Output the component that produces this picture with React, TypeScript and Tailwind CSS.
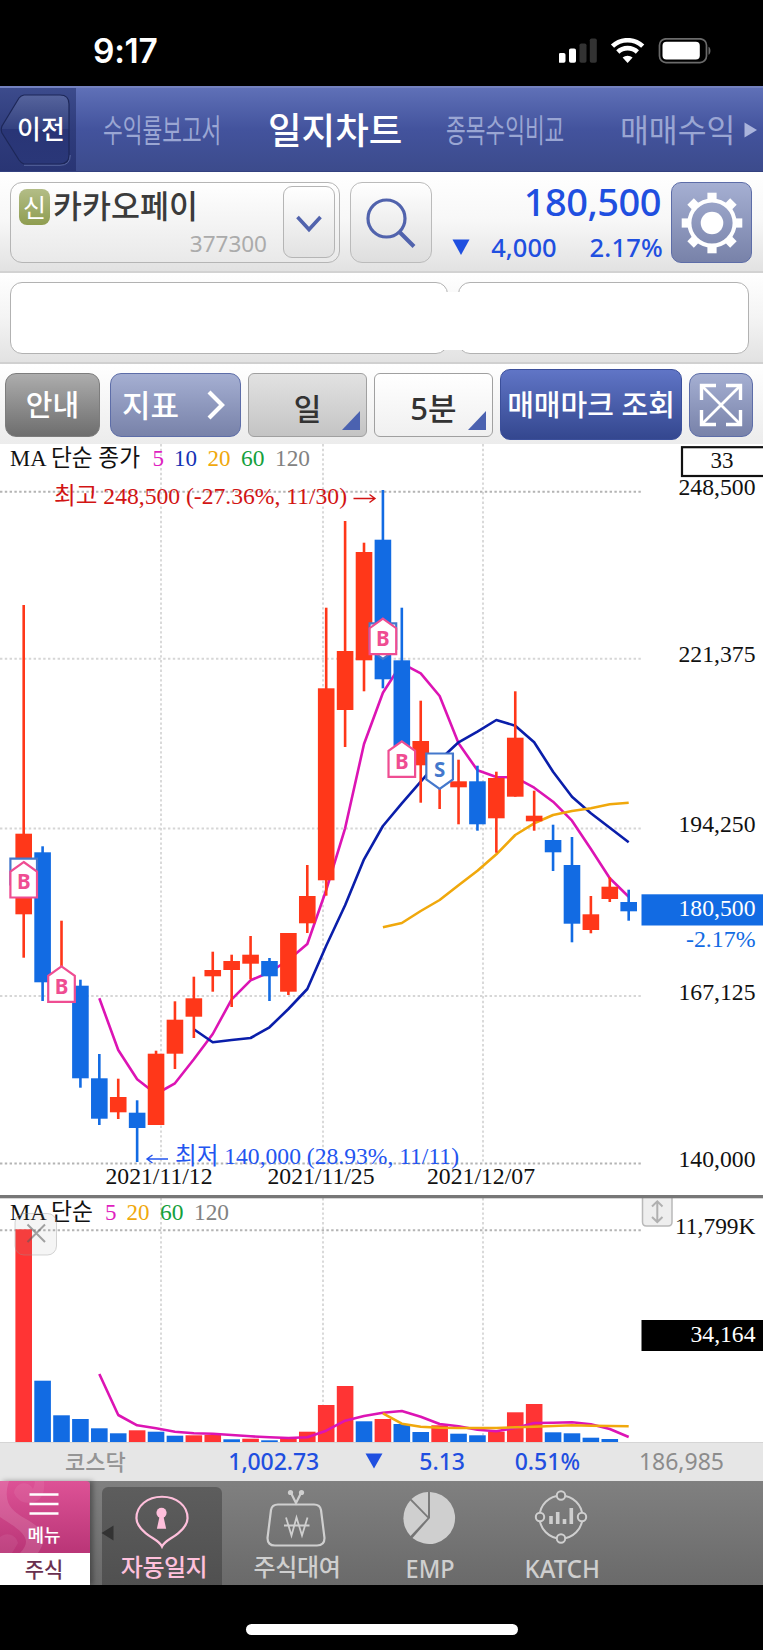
import { ReactNode } from "react";

type Candle = [number, number, number, number, "u" | "d"];

// high, body top, body bottom, low
const candles: Candle[] = [
  [605, 833.7, 914.3, 957.7, "u"],
  [846.3, 852.3, 982.3, 1001, "d"],
  [920.7, 974, 990, 998, "u"],
  [979.7, 985.7, 1078.3, 1087.7, "d"],
  [1054, 1078.3, 1118.7, 1125, "d"],
  [1078.7, 1097, 1112.3, 1119, "u"],
  [1100.3, 1112.7, 1128, 1162, "d"],
  [1050.7, 1053.7, 1125, 1125, "u"],
  [1001.3, 1019.7, 1053.7, 1069, "u"],
  [976.7, 998.3, 1016.7, 1038, "u"],
  [951.7, 970, 976.3, 991.7, "u"],
  [954.7, 961, 970, 1007, "u"],
  [936, 954.7, 963.7, 979.3, "u"],
  [958, 961, 976.3, 1001, "d"],
  [933, 933, 991.7, 995, "u"],
  [865, 896, 923.3, 933, "u"],
  [607.7, 688.3, 880.3, 895.7, "u"],
  [521, 651, 710, 747, "u"],
  [542.7, 552, 660.3, 691.3, "u"],
  [490, 539.7, 679.3, 688.3, "d"],
  [607.7, 660.3, 746, 760, "d"],
  [700.7, 741, 765.3, 802.7, "u"],
  [760, 764, 776, 809, "u"],
  [759.7, 781.3, 787.3, 824.3, "u"],
  [765.7, 781.3, 824.3, 830.7, "d"],
  [771.7, 778, 818.3, 852.7, "u"],
  [691.3, 737.7, 796.7, 796.7, "u"],
  [790.7, 815.7, 821.3, 830.7, "u"],
  [824.7, 840, 852.3, 871, "d"],
  [837, 865, 923.7, 942.3, "d"],
  [896, 914.3, 930, 933.3, "u"],
  [877.3, 886.7, 899, 902, "u"],
  [889.7, 902, 911.3, 920.7, "d"],
];

const volumes: [number, "u" | "d"][] = [
  [1229.3, "u"], [1380.7, "d"], [1415.3, "d"], [1419, "d"], [1428.3, "d"], [1433.3, "d"],
  [1430.3, "u"], [1431.7, "d"], [1435.7, "d"], [1435.3, "u"], [1435, "u"], [1439.3, "d"],
  [1438.7, "u"], [1440.3, "d"], [1438.3, "u"], [1431.7, "u"], [1405, "u"], [1386, "u"],
  [1421.3, "d"], [1419, "u"], [1424, "d"], [1432, "d"], [1425.3, "u"], [1433.7, "d"],
  [1435.3, "d"], [1431.7, "u"], [1412.3, "u"], [1404, "u"], [1432.3, "d"], [1433.3, "d"],
  [1437.7, "d"], [1439, "d"],
];

const ma5 = [
  998.3, 1050, 1079.3, 1094, 1083.3, 1059.3, 1034, 999.3, 980.3, 972.3, 960, 944, 890, 828.3, 744,
  692.7, 663.3, 673.3, 696, 743.3, 770.3, 777, 777.3, 787.7, 801.7, 820.7, 849, 878.3, 896.7,
];
const ma10 = [
  1029.3, 1042.3, 1040, 1038, 1027.3, 1009, 989, 945.7, 905.3, 859.3, 826, 803.3, 781.7, 760, 742.3,
  731.7, 720, 725.7, 742.3, 771.7, 796.7, 813.3, 827.7, 842.3,
];
const ma20 = [
  927.3, 923, 911, 900, 885.3, 870.7, 854.3, 835, 823.3, 815, 811, 808.3, 804.3, 802.7,
];
const vol5 = [
  1374, 1415, 1425.3, 1428.3, 1431.7, 1433.3, 1433.7, 1435, 1436.3, 1437.3, 1438, 1437.3, 1430.7,
  1420.7, 1416, 1412.7, 1411, 1416.7, 1424, 1426.3, 1429.7, 1431.3, 1428, 1423, 1422.7, 1422.3,
  1424.3, 1429, 1437,
];
const vol20 = [
  1413.3, 1423.7, 1426.7, 1427.7, 1428, 1428, 1428, 1427.3, 1426.7, 1426, 1425.3, 1425.7, 1426,
  1426.3,
];

const cx = (i: number) => 23.7 + i * 18.906;
const line = (start: number, ys: number[]) => ys.map((y, i) => `${cx(start + i)},${y}`).join(" ");

const HGRID: [number, string][] = [
  [491.7, "#b4b4b4"],
  [658.8, "#d6d6d6"],
  [828.6, "#d6d6d6"],
  [996, "#d6d6d6"],
  [1163.5, "#b4b4b4"],
];
const VGRID = [161, 323, 483];

const serif = "font-['Liberation_Serif','Noto_Sans_CJK_KR',serif]";
const sans = "font-['Noto_Sans','Noto_Sans_CJK_KR',sans-serif]";

function T({ x, y, w, fill = "#111", children }: { x: number; y: number; w: number; fill?: string; children: ReactNode }) {
  return (
    <text x={x} y={y} fill={fill} fontSize="23.5" textLength={w} lengthAdjust="spacingAndGlyphs">
      {children}
    </text>
  );
}

// a marker without a letter is the lower one of a stacked pair
function Marker({ i, y, sell, letter }: { i: number; y: number; sell?: boolean; letter?: string }) {
  const x = cx(i);
  const color = sell ? "#4478cc" : "#ef4d92";
  const points = sell
    ? `${x - 13.3},${y} ${x + 13.3},${y} ${x + 13.3},${y + 26} ${x},${y + 35.5} ${x - 13.3},${y + 26}`
    : `${x},${y} ${x + 13.3},${y + 9.5} ${x + 13.3},${y + 35.5} ${x - 13.3},${y + 35.5} ${x - 13.3},${y + 9.5}`;
  return (
    <g>
      <polygon points={points} fill="#fff" stroke={color} strokeWidth="2.2" />
      {letter && (
        <text
          x={x}
          y={y + (sell ? 23.5 : 27.3)}
          textAnchor="middle"
          fontSize="20.5"
          fontWeight="700"
          fill={color}
          className="font-['Noto_Sans',sans-serif]"
        >
          {letter}
        </text>
      )}
    </g>
  );
}

function StatusBar() {
  return (
    <div className="flex h-[86px] items-start bg-black pl-[93px] text-white">
      <span className="mt-[27px] w-[466px] font-['Inter',sans-serif] text-[33.5px] leading-[48px] font-semibold tracking-[-0.3px]">
        9:17
      </span>
      <svg className="mt-[38px]" width="152" height="26" viewBox="0 0 152 26" fill="none">
        <rect x="-0.5" y="15" width="7" height="9.8" rx="1.8" fill="#fff" />
        <rect x="10" y="10.5" width="7" height="14.3" rx="1.8" fill="#fff" />
        <rect x="20.5" y="5.5" width="7" height="19.3" rx="1.8" fill="#333" />
        <rect x="30.8" y="0.5" width="7" height="24.3" rx="1.8" fill="#333" />
        <g stroke="#fff" strokeWidth="4.6">
          <path d="M53.5 8.2a22 22 0 0 1 30.2 0" />
          <path d="M58.8 14a14.2 14.2 0 0 1 19.6 0" />
        </g>
        <path d="M68.6 25l-5-5.4a7.6 7.6 0 0 1 10 0z" fill="#fff" />
        <rect x="100.5" y="0.8" width="47" height="23.8" rx="6.5" stroke="#6b6b6b" strokeWidth="1.7" />
        <rect x="103.5" y="3.8" width="37.3" height="17.8" rx="4" fill="#fff" />
        <path d="M149.500 8.7c2.6 1 2.6 7 0 8z" fill="#6b6b6b" />
      </svg>
    </div>
  );
}

function TopNav() {
  return (
    <nav className="flex h-[86px] items-center overflow-hidden border-t-2 border-b border-t-[#7381bf] border-b-[#344280] bg-linear-to-b from-[#5f70b7] via-[#43539d] via-50% to-[#3c4b8c] whitespace-nowrap">
      <div className="relative h-full w-[76px] shrink-0 bg-linear-to-b from-[#3c4b8c] via-[#2f3c7c] via-50% to-[#293574]">
        <svg className="absolute top-[6px] left-0" width="72" height="72" viewBox="0 0 72 72">
          <defs>
            <linearGradient id="back" x2="0" y2="1">
              <stop offset="0" stopColor="#56649d" />
              <stop offset="0.5" stopColor="#33417f" />
              <stop offset="0.5" stopColor="#293576" />
              <stop offset="1" stopColor="#2a3778" />
            </linearGradient>
          </defs>
          <path
            d="M24 1H60Q69 1 69 10V61Q69 70 60 70H24Q21 69 19 66L2 39Q0.500 35.500 2 32L19 4Q21 1.500 24 1Z"
            fill="url(#back)"
            stroke="#1d2758"
            strokeWidth="1.2"
          />
          <path d="M24 71.300H60Q70.300 71.300 70.300 61" fill="none" stroke="#56649d" strokeWidth="1" />
        </svg>
        <span className="absolute top-[24px] left-[17px] text-[26px] leading-[34px] font-medium text-white">이전</span>
      </div>
      <span className="ml-[27px] w-[165px]">
        <span className="inline-block origin-left scale-x-[0.67] text-[32px] leading-[40px] text-[#9aa6d3]">수익률보고서</span>
      </span>
      <span className="w-[178px] text-[36.5px] leading-[44px] font-medium text-white">일지차트</span>
      <span className="w-[174px]">
        <span className="inline-block origin-left scale-x-[0.67] text-[32px] leading-[40px] text-[#9aa6d3]">종목수익비교</span>
      </span>
      <span className="w-[124px]">
        <span className="inline-block origin-left scale-x-[0.98] text-[32px] leading-[40px] text-[#9aa6d3]">매매수익</span>
      </span>
      <svg width="14" height="16" viewBox="0 0 14 16" className="shrink-0">
        <path d="M0.500 0.500L13 8L0.500 15.500Z" fill="#aab4dc" />
      </svg>
    </nav>
  );
}

const Gear = () => (
  <svg width="62" height="62" viewBox="-31 -31 62 62" fill="#fff">
    {[0, 45, 90, 135, 180, 225, 270, 315].map((deg) => (
      <path key={deg} transform={`rotate(${deg})`} d="M-4.600 -23V-30.300H4.600V-23Z" />
    ))}
    <circle r="22.600" fill="none" stroke="#fff" strokeWidth="4" />
    <circle r="11.300" />
  </svg>
);

function QuoteRow() {
  return (
    <section className="flex h-[101px] border-b-2 border-[#d2d2d2] bg-linear-to-b from-white via-[#f7f7f7] to-[#e2e2e2] pt-[10px] pl-[10px]">
      <div className="flex h-[81px] w-[330px] rounded-xl border-[1.5px] border-[#b5b5b5] bg-linear-to-b from-white to-[#e9e9e9]">
        <div className="flex w-[272px] flex-col pt-[5px] pl-[8px]">
          <div className="flex h-[38px] items-center">
            <span className="flex h-[36px] w-[31px] items-center justify-center rounded-[8px] bg-linear-to-b from-[#b3bd87] to-[#8f9d50]">
              <span className="text-[25px] leading-none text-white">신</span>
            </span>
            <span className="mb-[2px] ml-[3px] text-[31.5px] leading-[36px] font-medium text-[#3b3b3b]">카카오페이</span>
          </div>
          <span className="mt-px pr-[16px] text-right text-[22.5px] leading-[34px] text-[#ababab]">377300</span>
        </div>
        <div className="mt-[3px] flex h-[72px] w-[52px] items-center justify-center rounded-[9px] border-[1.5px] border-[#b5b5b5] bg-linear-to-b from-white to-[#e2e2e2] pt-[3px]">
          <svg width="26" height="18" viewBox="0 0 26 18">
            <path d="M1.500 2L13 14.500L24.500 2" fill="none" stroke="#5163ad" strokeWidth="3.600" />
          </svg>
        </div>
      </div>
      <div className="ml-[10px] flex h-[81px] w-[82px] items-center justify-center rounded-xl border-[1.5px] border-[#bbb] bg-linear-to-b from-white to-[#dedede]">
        <svg width="50" height="50" viewBox="0 0 50 50" fill="none" stroke="#5163ad" strokeWidth="3.200">
          <circle cx="20.500" cy="20.500" r="18.500" />
          <path d="M33.500 34L48 48.500" strokeWidth="4" />
        </svg>
      </div>
      <div className="flex w-[231px] flex-col items-end text-[#1f4fe0]">
        <span className="mt-[-7px] pr-[2px] text-[38px] leading-[52px] font-medium tracking-[-0.5px]">180,500</span>
        <span className="flex items-center text-[25.5px] leading-[40px] font-medium">
          <svg width="18" height="17" viewBox="0 0 18 17" className="mr-[21px]">
            <path d="M0.500 0.500H17.500L9 16Z" fill="#1f4fe0" />
          </svg>
          <span className="mr-[33px]">4,000</span>
          <span className="tracking-[0.2px]">2.17%</span>
        </span>
      </div>
      <div className="ml-[8px] flex h-[81px] w-[81px] items-center justify-center rounded-[10px] border-[1.5px] border-[#5d6da8] bg-linear-to-b from-[#a5afd2] to-[#7882a9]">
        <Gear />
      </div>
    </section>
  );
}

function FieldsRow() {
  return (
    <section className="relative flex h-[91px] border-b-2 border-[#d0d0d0] bg-linear-to-b from-white via-[#f4f4f4] to-[#e2e2e2] pt-[9px] pl-[10px]">
      <div className="h-[72px] w-[438px] rounded-xl border-[1.5px] border-[#b2b2b2] bg-white" />
      <div className="ml-[10px] h-[72px] w-[291px] rounded-xl border-[1.5px] border-[#b2b2b2] bg-white" />
      <div className="absolute top-[19px] left-[17px] h-[58px] w-[727px] bg-white" />
    </section>
  );
}

const Corner = () => (
  <svg width="18" height="19" viewBox="0 0 18 19" className="absolute right-[6px] bottom-[6px]">
    <path d="M18 0V19H0Z" fill="#4b62b0" />
  </svg>
);

function Toolbar() {
  return (
    <section className="flex h-[80px] bg-linear-to-b from-white to-[#ececec] pt-[9px] pl-[5px] whitespace-nowrap text-white">
      <div className="flex h-[64px] w-[95px] items-center justify-center rounded-[11px] border-[1.5px] border-[#7d7d7d] bg-linear-to-b from-[#adadad] to-[#6e6e6e]">
        <span className="text-[29px] font-medium">안내</span>
      </div>
      <div className="ml-[10px] flex h-[64px] w-[131px] items-center rounded-[11px] border-[1.5px] border-[#5d6da8] bg-linear-to-b from-[#a5afd2] to-[#7882a9] pl-[11px]">
        <span className="text-[31px] font-medium">지표</span>
        <svg width="18" height="30" viewBox="0 0 18 30" className="ml-[28px]">
          <path d="M2 2L15 15L2 28" fill="none" stroke="#fff" strokeWidth="4.200" />
        </svg>
      </div>
      <div className="relative ml-[7px] flex h-[64px] w-[119px] items-center justify-center rounded-[6px] border-[1.5px] border-[#a0a0a0] bg-linear-to-b from-[#e2e2e2] to-[#c4c4c4] text-[#333]">
        <span className="pt-[6px] text-[30px] font-medium">일</span>
        <Corner />
      </div>
      <div className="relative ml-[7px] flex h-[64px] w-[119px] items-center justify-center rounded-[6px] border-[1.5px] border-[#a0a0a0] bg-linear-to-b from-white to-[#f0f0f0] text-[#333]">
        <span className="pt-[6px] text-[31px] font-medium">5분</span>
        <Corner />
      </div>
      <div className="mt-[-4px] ml-[7px] flex h-[71px] w-[182px] items-center justify-center rounded-[10px] border-[1.5px] border-[#3b4f9b] bg-linear-to-b from-[#6075c6] to-[#34478f]">
        <span className="text-[29px] font-medium">매매마크 조회</span>
      </div>
      <div className="ml-[7px] flex h-[64px] w-[64px] items-center justify-center rounded-[11px] border-[1.5px] border-[#5d6da8] bg-linear-to-b from-[#a5afd2] to-[#7882a9]">
        <svg width="44" height="44" viewBox="0 0 44 44" fill="none" stroke="#fff" strokeWidth="3.400">
          <path d="M3 3L41 41M41 3L3 41" strokeWidth="2.800" />
          <path d="M2.500 17V2.500H17M27 2.500H41.500V17M41.500 27V41.500H27M17 41.500H2.500V27" />
        </svg>
      </div>
    </section>
  );
}

function PriceChart() {
  return (
    <svg width="763" height="753" viewBox="0 444 763 753" className={`block ${serif}`}>
      {VGRID.map((x) => (
        <line key={x} x1={x} x2={x} y1="444" y2="1163" stroke="#d9d9d9" strokeWidth="2" strokeDasharray="2.400 2.400" />
      ))}
      {HGRID.map(([y, color]) => (
        <line key={y} x1="0" x2="641.5" y1={y} y2={y} stroke={color} strokeWidth="2" strokeDasharray="2.400 2.400" />
      ))}

      <g fill="none" strokeWidth="2.6" strokeLinejoin="round">
        <polyline points={line(4, ma5)} stroke="#dc14b4" />
        <polyline points={line(9, ma10)} stroke="#0a1eaa" />
        <polyline points={line(19, ma20)} stroke="#f0a80c" />
      </g>

      {candles.map(([high, top, bottom, low, dir], i) => {
        const color = dir === "u" ? "#ff3719" : "#126be3";
        return (
          <g key={i} fill={color}>
            <rect x={cx(i) - 1.3} y={high} width="2.6" height={low - high} />
            <rect x={cx(i) - 8.3} y={top} width="16.6" height={bottom - top} />
          </g>
        );
      })}

      <Marker i={0} y={858.7} sell />
      <Marker i={0} y={862} letter="B" />
      <Marker i={2} y={966.3} letter="B" />
      <Marker i={19} y={623.3} sell />
      <Marker i={19} y={618.7} letter="B" />
      <Marker i={20} y={741.3} letter="B" />
      <Marker i={22} y={753.5} sell letter="S" />

      <T x={10} y={466} w={130}>MA 단순 종가</T>
      <T x={152.5} y={466.3} w={11.5} fill="#e01ec0">5</T>
      <T x={174} y={466.3} w={23} fill="#1432b4">10</T>
      <T x={207.5} y={466.3} w={23} fill="#f0a80c">20</T>
      <T x={241} y={466.3} w={23.5} fill="#14a03c">60</T>
      <T x={275} y={466.3} w={35} fill="#828282">120</T>

      <T x={54} y={504.3} w={293} fill="#d21414">최고 248,500 (-27.36%, 11/30)</T>
      <path d="M353.5 498.500H375M369.500 494.500L375 498.500L369.500 502.500" fill="none" stroke="#d21414" strokeWidth="1.4" />
      <path d="M168 1159H147M152.500 1155L147 1159L152.500 1163" fill="none" stroke="#2355f0" strokeWidth="1.4" />
      <T x={175} y={1164} w={284} fill="#2355f0">최저 140,000 (28.93%, 11/11)</T>

      <T x={105.5} y={1184} w={107}>2021/11/12</T>
      <T x={267.5} y={1184} w={107}>2021/11/25</T>
      <T x={427} y={1184} w={108}>2021/12/07</T>

      <rect x="682" y="447.2" width="90" height="28.8" fill="#fff" stroke="#111" strokeWidth="2.2" />
      <T x={710.5} y={468.3} w={23}>33</T>
      <T x={678.5} y={495} w={77}>248,500</T>
      <T x={678.5} y={662.3} w={77}>221,375</T>
      <T x={678.5} y={832} w={77}>194,250</T>
      <rect x="641.5" y="894.3" width="122" height="31.2" fill="#126be3" />
      <T x={678.5} y={915.7} w={77} fill="#fff">180,500</T>
      <T x={686} y={947.3} w={69.5} fill="#126be3">-2.17%</T>
      <T x={678.5} y={999.5} w={77}>167,125</T>
      <T x={678.5} y={1167} w={77}>140,000</T>
    </svg>
  );
}

function VolumeChart() {
  return (
    <svg width="763" height="245" viewBox="0 1197 763 245" className={`block ${serif}`}>
      {VGRID.map((x) => (
        <line key={x} x1={x} x2={x} y1="1198" y2="1442" stroke="#d9d9d9" strokeWidth="2" strokeDasharray="2.400 2.400" />
      ))}
      <line x1="0" x2="641.5" y1="1230.3" y2="1230.3" stroke="#b4b4b4" strokeWidth="2" strokeDasharray="2.400 2.400" />

      {volumes.map(([top, dir], i) => (
        <rect key={i} x={cx(i) - 8.3} y={top} width="16.6" height={1442 - top} fill={dir === "u" ? "#ff3434" : "#126be3"} />
      ))}
      <g fill="none" strokeWidth="2.6" strokeLinejoin="round">
        <polyline points={line(4, vol5)} stroke="#dc14b4" />
        <polyline points={line(19, vol20)} stroke="#f0a80c" />
      </g>

      <T x={10} y={1219.7} w={83}>MA 단순</T>
      <T x={105} y={1219.7} w={11.5} fill="#e01ec0">5</T>
      <T x={126.5} y={1219.7} w={23} fill="#f0a80c">20</T>
      <T x={160} y={1219.7} w={23.5} fill="#14a03c">60</T>
      <T x={194} y={1219.7} w={35} fill="#828282">120</T>

      <rect x="15" y="1213.5" width="41.5" height="41.5" rx="9" fill="#a0a0a0" fillOpacity="0.1" stroke="#969696" strokeOpacity="0.4" />
      <path d="M27.5 1224.500L45 1242M45 1224.500L27.500 1242" stroke="#5a5a5a" strokeOpacity="0.55" strokeWidth="2" />

      <path d="M642.5 1197V1222Q642.500 1226 646.500 1226H668Q672 1226 672 1222V1197Z" fill="#eee" stroke="#b9b9b9" strokeWidth="1.5" />
      <path d="M657.3 1202V1221M652 1206.500L657.300 1201.300L662.500 1206.500M652 1217L657.300 1222L662.500 1217" fill="none" stroke="#b0b0b0" strokeWidth="2" />
      <T x={675} y={1234} w={80.5}>11,799K</T>
      <rect x="641.5" y="1320" width="122" height="31" fill="#000" />
      <T x={690.5} y={1342} w={65} fill="#fff">34,164</T>
      <rect x="0" y="1197" width="763" height="1.3" fill="#777" />
    </svg>
  );
}

function IndexBar() {
  return (
    <div className="flex h-[39px] items-center border-t border-[#d5d5d5] bg-[#e6e6e6] pb-[2px] text-[23px] leading-[30px] font-medium whitespace-nowrap text-[#1f4fe0]">
      <span className="w-[164px] pl-[65px] text-[22px] text-[#949494]">코스닥</span>
      <span className="w-[155px] text-right tracking-[-0.1px]">1,002.73</span>
      <svg width="18" height="16" viewBox="0 0 18 16" className="ml-[46px]">
        <path d="M0.500 0.500H17.500L9 15.500Z" fill="#1f4fe0" />
      </svg>
      <span className="w-[82px] text-right">5.13</span>
      <span className="w-[115px] text-right">0.51%</span>
      <span className="w-[144px] text-right font-normal text-[#8c8c8c]">186,985</span>
    </div>
  );
}

function TabBar() {
  return (
    <footer className="flex h-[104px] bg-linear-to-b from-[#808080] to-[#6a6a6a] whitespace-nowrap text-[#cfcfcf]">
      <div className="flex w-[90px] flex-col text-center shadow-[3px_0_5px_rgba(0,0,0,0.35)]">
        <div className="relative h-[72px] overflow-hidden rounded-tr-[4px] bg-linear-to-b from-[#dd5296] to-[#b93577]">
          <svg className="absolute inset-0" width="90" height="72" viewBox="0 0 90 72">
            <path d="M0 0H9C2 22 12 30 26 38C44 48 48 58 38 72H20C34 58 22 50 0 36Z" fill="#fff" fillOpacity="0.13" />
            <path d="M14 12A10 10 0 0 1 33 8Q36 0 34 0H44Q46 20 30 22Q18 22 14 12ZM0 56A11 11 0 0 1 18 62L12 72H0Z" fill="#fff" fillOpacity="0.07" />
            <path d="M29.500 13.500H58.500M29.500 23H58.500M29.500 32.500H58.500" stroke="#fff" strokeWidth="2.6" />
          </svg>
          <span className="relative mt-[40px] block pr-[2px] text-[18px] leading-[28px] font-medium text-white">메뉴</span>
        </div>
        <div className="h-[32px] bg-white pr-[2px] text-[21px] leading-[33px] font-medium text-[#69304f]">주식</div>
      </div>

      <div className="relative mt-[6px] ml-[12px] flex w-[120px] flex-col items-center rounded-t-[6px] bg-linear-to-b from-[#5d5d5d] to-[#505050] text-[#ffc0dc]">
        <svg className="absolute top-[38px] left-[-1px]" width="13" height="16" viewBox="0 0 13 16">
          <path d="M12.500 0.500V15.500L0.500 8Z" fill="#333" />
        </svg>
        <svg className="mt-[8px]" width="56" height="56" viewBox="0 0 56 56">
          <path
            d="M28 53.500C25 47 18 45.500 11 39.500C5 34.500 1.500 30 1.500 24C1.500 11 13 1.800 28 1.800C43 1.800 54.500 11 54.500 24C54.500 30 51 34.500 45 39.500C38 45.500 31 47 28 53.500Z"
            fill="none"
            stroke="#ffc0dc"
            strokeWidth="2.3"
          />
          <circle cx="27.5" cy="18.500" r="5.3" fill="#ffc0dc" />
          <path d="M26 20H29L32.300 35H22.700Z" fill="#ffc0dc" />
        </svg>
        <span className="ml-[4px] text-[24px] leading-[36px] font-medium tracking-[-0.5px]">자동일지</span>
      </div>

      <div className="ml-[13px] flex w-[122px] flex-col items-center pt-[8px]">
        <svg width="60" height="60" viewBox="0 0 60 60" fill="none" stroke="#cfcfcf" strokeWidth="2.2">
          <path d="M12 15.500H48Q54 15.500 55 21L58.500 49Q58.500 56.500 51 56.500H9Q1.500 56.500 1.500 49L5 21Q6 15.500 12 15.500Z" />
          <path d="M25 4L30 14L35 4" />
          <circle cx="24.5" cy="3.500" r="2.6" fill="#cfcfcf" stroke="none" />
          <circle cx="35.5" cy="3.500" r="2.6" fill="#cfcfcf" stroke="none" />
          <path d="M20 28.500L25.500 46.500L30.500 28.500L36 46.500L41.500 28.500M18 36.500H43.500" strokeWidth="1.8" />
        </svg>
        <span className="mt-px ml-[2px] text-[24px] leading-[34px] font-medium tracking-[-0.3px]">주식대여</span>
      </div>

      <div className="ml-[11px] flex w-[122px] flex-col items-center pt-[10px]">
        <svg width="54" height="54" viewBox="-27 -27 54 54" fill="#cfcfcf">
          <path d="M1 -26A26 26 0 1 1 -16.500 20L1 0Z" />
          <path d="M-1 -26V-2L-17.500 -19A26 26 0 0 1 -1 -26Z" />
          <path d="M-18.700 -17.500L-1.500 0L-18.500 18A26 26 0 0 1 -18.700 -17.500Z" />
        </svg>
        <span className="mt-[6px] ml-[2px] scale-x-[0.94] text-[25px] leading-[34px] font-medium">EMP</span>
      </div>

      <div className="ml-[10px] flex w-[122px] flex-col items-center pt-[9px]">
        <svg width="54" height="54" viewBox="-27 -27 54 54" fill="none" stroke="#cfcfcf" strokeWidth="2">
          <circle r="21.5" />
          <g fill="#757575">
            <circle cy="-21.5" r="4.2" />
            <circle cy="21.5" r="4.2" />
            <circle cx="-21" r="4.2" />
            <circle cx="21" r="4.2" />
          </g>
          <path d="M-10 7V-1M-3.300 7V-5M3.500 7V2M10.300 7V-9" strokeWidth="3.6" />
        </svg>
        <span className="mt-[7px] ml-[3px] scale-x-[0.96] text-[25px] leading-[34px] font-medium">KATCH</span>
      </div>
    </footer>
  );
}

export default function App() {
  return (
    <main className={`flex h-[1650px] w-[763px] flex-col overflow-hidden bg-black ${sans}`}>
      <StatusBar />
      <TopNav />
      <QuoteRow />
      <FieldsRow />
      <Toolbar />
      <section className="bg-white">
        <PriceChart />
        <div className="-mt-[2px] h-[2px] bg-[#777]" />
        <VolumeChart />
      </section>
      <IndexBar />
      <TabBar />
      <div className="flex grow justify-center pt-[39px]">
        <div className="h-[11px] w-[272px] rounded-full bg-white" />
      </div>
    </main>
  );
}
